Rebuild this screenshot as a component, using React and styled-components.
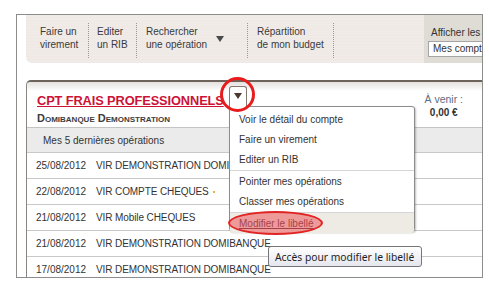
import React from "react";
import styled, { createGlobalStyle } from "styled-components";

const Global = createGlobalStyle`
  html, body { margin: 0; padding: 0; background: #fff; }
  body { font-family: "Liberation Sans", Arial, sans-serif; color: #333; }
  * { box-sizing: border-box; }
`;

const Frame = styled.div`
  position: relative;
  margin: 14px 0 0 16px;
  width: 467px;
  height: 264px;
  border: 1px solid #8c8c8c;
  overflow: hidden;
  background: #fff;
`;

const Toolbar = styled.div`
  display: flex;
  align-items: stretch;
  margin-left: 9px;
  margin-right: -6px;
  height: 48px;
  border-bottom-left-radius: 6px;
  overflow: hidden;
  background: repeating-linear-gradient(
    to bottom,
    #efece8 0px,
    #efece8 2px,
    #f1e7e5 2px,
    #f1e7e5 3px
  );
`;

const ToolItem = styled.div`
  display: flex;
  align-items: flex-start;
  width: ${(p) => p.$w}px;
  padding: 10px 0 0 ${(p) => p.$pl}px;
  font-size: 10px;
  line-height: 13px;
  color: #3a3a3a;
`;

const ToolSep = styled.div`
  align-self: center;
  width: 1px;
  height: 35px;
  margin-top: 2px;
  background: repeating-linear-gradient(to bottom, #9a9a9a 0, #9a9a9a 1px, transparent 1px, transparent 2px);
`;

const Caret = styled.span`
  width: 0;
  height: 0;
  margin: ${(p) => p.$mt ?? 11}px 0 0 ${(p) => p.$ml || 0}px;
  border-left: 4px solid transparent;
  border-right: 4px solid transparent;
  border-top: 6px solid ${(p) => p.$c || "#4a4a4a"};
`;

const Spacer = styled.div`
  flex: 1;
`;

const ViewPanel = styled.div`
  width: 64px;
  background: #dfdcd5;
  padding: 12px 0 0 7px;
  font-size: 10px;
  color: #333;
  white-space: nowrap;
`;

const ViewSelect = styled.div`
  margin-top: 3px;
  margin-left: -3px;
  height: 16px;
  background: #fff;
  border: 1px solid #a5a5a5;
  border-right: none;
  padding: 1px 0 0 4px;
  font-size: 10px;
  white-space: nowrap;
  overflow: hidden;
`;

const Card = styled.div`
  position: relative;
  margin: 17px 0 0 9px;
  width: 470px;
  border-top: 2px solid #6e635b;
  border-left: 1px solid #8a8580;
  border-top-left-radius: 5px;
`;

const CardHead = styled.div`
  display: grid;
  grid-template-columns: 1fr auto;
  height: 46px;
  border-bottom: 1px solid #c4c4c4;
  background: linear-gradient(to bottom, #e4e1dd 0px, #fff 9px);
  border-top-left-radius: 4px;
`;

const Titles = styled.div`
  padding: 9px 0 0 10px;
`;

const AccountName = styled.a`
  display: inline-block;
  font-size: 12.8px;
  line-height: 14px;
  font-weight: bold;
  color: #cc1236;
  text-decoration: underline;
  letter-spacing: -0.1px;
`;

const Holder = styled.div`
  margin-top: 3px;
  font-size: 11px;
  font-weight: bold;
  font-variant: small-caps;
  color: #3c3c3c;
`;

const Upcoming = styled.div`
  padding: 10px 33px 0 0;
  text-align: center;
  font-size: 10.5px;
  line-height: 14px;
`;

const UpLabel = styled.div`
  color: #5d6c82;
`;

const UpAmount = styled.div`
  font-weight: bold;
  font-size: 10px;
  color: #333;
`;

const SectionRow = styled.div`
  height: 25px;
  display: flex;
  align-items: center;
  padding-left: 16px;
  background: #ebebeb;
  border-bottom: 1px solid #c9c9c9;
  font-size: 10px;
  color: #333;
`;

const OpRow = styled.div`
  height: 26px;
  display: flex;
  align-items: center;
  padding-left: 9px;
  border-bottom: 1px solid #c9c9c9;
  font-size: 10px;
  color: #333;
  white-space: nowrap;
`;

const OpDate = styled.span`
  width: 60px;
`;

const OpLabel = styled.span`
  letter-spacing: -0.1px;
`;

const Dot = styled.span`
  display: inline-block;
  width: 2px;
  height: 2px;
  margin-left: 4px;
  background: #f0b040;
  vertical-align: middle;
`;

const Tab = styled.div`
  position: absolute;
  left: 202px;
  top: 4px;
  width: 18px;
  height: 21px;
  background: #fff;
  border: 1px solid #85786e;
  border-bottom: none;
  border-radius: 3px 3px 0 0;
  display: flex;
  justify-content: center;
  z-index: 3;
`;

const Menu = styled.div`
  position: absolute;
  left: 202px;
  top: 24px;
  width: 186px;
  height: 126px;
  background: #fff;
  border: 1px solid #8c8c8c;
  border-radius: 0 3px 4px 4px;
  box-shadow: 1px 1px 2px rgba(0, 0, 0, 0.25);
  padding-top: 2px;
  z-index: 2;
`;

const MenuItem = styled.div`
  position: relative;
  height: 20px;
  display: flex;
  align-items: center;
  padding-left: 9px;
  font-size: 10px;
  color: #333;
  background: ${(p) => (p.$active ? "#eeebe4" : "transparent")};
  border-radius: ${(p) => (p.$active ? "0 0 3px 3px" : "0")};
`;

const MenuSep = styled.div`
  height: 1px;
  background: #d6d6d6;
  margin: 1px 0 0;
`;

const ActiveText = styled.span`
  position: relative;
  color: #a8404c;
  text-decoration: underline;
  z-index: 1;
`;

const Highlight = styled.span`
  position: absolute;
  left: -2px;
  top: -2px;
  width: 95px;
  height: 24px;
  border: 2px solid #e02424;
  border-radius: 50%;
  background: rgba(238, 120, 120, 0.7);
`;

const RedRing = styled.div`
  position: absolute;
  left: 193px;
  top: -5px;
  width: 35px;
  height: 35px;
  border: 3.5px solid #e81c1c;
  border-radius: 50%;
  z-index: 4;
`;

const Tooltip = styled.div`
  position: absolute;
  left: 241px;
  top: 164px;
  width: 154px;
  height: 21px;
  padding: 0 0 0 6px;
  display: flex;
  align-items: center;
  background: linear-gradient(to bottom, #ffffff, #e5e6ee);
  border: 1px solid #767676;
  border-radius: 3px;
  font-family: "Noto Sans", "DejaVu Sans", sans-serif;
  font-size: 10.3px;
  color: #1e1e1e;
  white-space: nowrap;
  z-index: 5;
`;

const ops = [
  ["25/08/2012", "VIR DEMONSTRATION DOMIBANQUE"],
  ["22/08/2012", "VIR COMPTE CHEQUES", true],
  ["21/08/2012", "VIR Mobile CHEQUES"],
  ["21/08/2012", "VIR DEMONSTRATION DOMIBANQUE"],
  ["17/08/2012", "VIR DEMONSTRATION DOMIBANQUE"],
];

export default function App() {
  return (
    <>
      <Global />
      <Frame>
        <Toolbar>
          <ToolItem $w={62} $pl={14}>
            Faire un
            <br />
            virement
          </ToolItem>
          <ToolSep />
          <ToolItem $w={47} $pl={8}>
            Editer
            <br />
            un RIB
          </ToolItem>
          <ToolSep />
          <ToolItem $w={110} $pl={9}>
            <span>
              Rechercher
              <br />
              une opération
            </span>
            <Caret $ml={9} />
          </ToolItem>
          <ToolSep />
          <ToolItem $w={85} $pl={9}>
            Répartition
            <br />
            de mon budget
          </ToolItem>
          <ToolSep />
          <Spacer />
          <ViewPanel>
            Afficher les
            <ViewSelect>Mes comptes</ViewSelect>
          </ViewPanel>
        </Toolbar>

        <Card>
          <CardHead>
            <Titles>
              <AccountName>CPT FRAIS PROFESSIONNELS</AccountName>
              <Holder>Domibanque Demonstration</Holder>
            </Titles>
            <Upcoming>
              <UpLabel>À venir :</UpLabel>
              <UpAmount>0,00 €</UpAmount>
            </Upcoming>
          </CardHead>
          <SectionRow>Mes 5 dernières opérations</SectionRow>
          {ops.map(([d, l, dot], i) => (
            <OpRow key={i}>
              <OpDate>{d}</OpDate>
              <OpLabel>{l}</OpLabel>
              {dot && <Dot />}
            </OpRow>
          ))}

          <Tab>
            <Caret $c="#4b3a2f" $mt={6} />
          </Tab>
          <RedRing />
          <Menu>
            <MenuItem>Voir le détail du compte</MenuItem>
            <MenuItem>Faire un virement</MenuItem>
            <MenuItem>Editer un RIB</MenuItem>
            <MenuSep />
            <MenuItem>Pointer mes opérations</MenuItem>
            <MenuItem>Classer mes opérations</MenuItem>
            <MenuSep />
            <MenuItem $active>
              <Highlight />
              <ActiveText>Modifier le libellé</ActiveText>
            </MenuItem>
          </Menu>
          <Tooltip>Accès pour modifier le libellé</Tooltip>
        </Card>
      </Frame>
    </>
  );
}
